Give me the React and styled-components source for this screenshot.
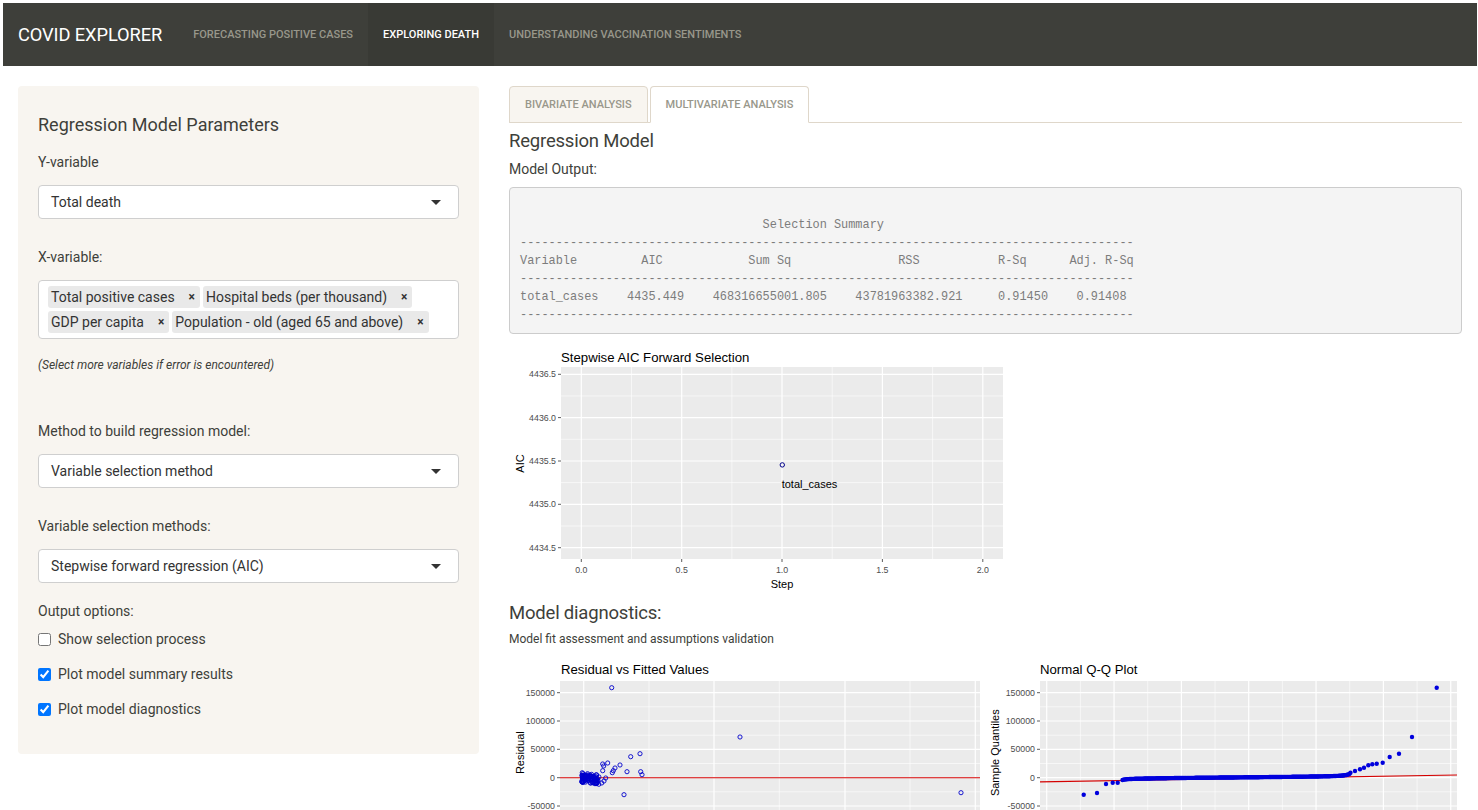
import React from 'react';
import styled, { createGlobalStyle } from 'styled-components';

const GlobalStyle = createGlobalStyle`
  html, body {
    margin: 0;
    overflow: hidden;
    background: #fff;
  }
  body {
    padding: 3px 1px 0 3px;
    font-family: Roboto, "Noto Sans", sans-serif;
    color: #3e3f3a;
  }
  * { box-sizing: border-box; }
`;

const Page = styled.div`
  width: 1474px;
`;

const NavBar = styled.nav`
  display: flex;
  height: 63px;
  background: #3e3f3a;
  padding-left: 15px;
`;

const Brand = styled.div`
  display: flex;
  align-items: center;
  padding-right: 16px;
  color: #fff;
  font-size: 18.3px;
  letter-spacing: -0.1px;
`;

const NavItem = styled.div`
  display: flex;
  align-items: center;
  padding: 0 15px;
  font-size: 11px;
  font-weight: 500;
  text-transform: uppercase;
  color: ${(p) => (p.$active ? '#fff' : '#98978b')};
  background: ${(p) => (p.$active ? '#393a35' : 'transparent')};
`;

const Layout = styled.div`
  display: grid;
  grid-template-columns: 461px 1fr;
  gap: 30px;
  padding: 20px 15px 0;
  align-items: start;
`;

const Well = styled.aside`
  background: #f8f5f0;
  border-radius: 4px;
  padding: 19px 20px 35px;
  display: flex;
  flex-direction: column;
`;

const PanelTitle = styled.h4`
  margin: 9px 0 0;
  font-size: 18px;
  font-weight: 400;
  line-height: 22px;
`;

const FieldLabel = styled.div`
  margin-top: ${(p) => p.$mt}px;
  margin-bottom: ${(p) => p.$mb ?? 13}px;
  font-size: 14px;
  line-height: 20px;
`;

const SelectBox = styled.div`
  position: relative;
  height: 34px;
  background: #fff;
  border: 1px solid #cfcfcf;
  border-radius: 4px;
  padding: 0 12px;
  display: flex;
  align-items: center;
  font-size: 14px;
  color: #333;
`;

const Caret = styled.span`
  position: absolute;
  right: 17px;
  top: 14px;
  width: 0;
  height: 0;
  border-left: 5px solid transparent;
  border-right: 5px solid transparent;
  border-top: 5px solid #333;
`;

const MultiBox = styled.div`
  height: 59px;
  background: #fff;
  border: 1px solid #cfcfcf;
  border-radius: 4px;
  padding: 5px 9px 0;
  display: flex;
  flex-wrap: wrap;
  align-content: flex-start;
  gap: 3px;
`;

const Tag = styled.span`
  display: inline-flex;
  align-items: center;
  height: 22px;
  padding: 0 5px 0 3px;
  background: #e9e9e9;
  border-radius: 3px;
  font-size: 14px;
  color: #333;
`;

const TagRemove = styled.span`
  margin-left: 14px;
  font-size: 12px;
  font-weight: 700;
  color: #333;
`;

const HelpText = styled.div`
  margin-top: 18px;
  font-size: 12px;
  line-height: 17px;
  font-style: italic;
`;

const CheckRow = styled.label`
  display: flex;
  align-items: center;
  height: 20px;
  margin-top: ${(p) => p.$mt}px;
  font-size: 14px;
`;

const CheckInput = styled.input`
  width: 13px;
  height: 13px;
  margin: 0 7px 0 0;
`;

const Main = styled.main`
  display: flex;
  flex-direction: column;
`;

const TabBar = styled.div`
  display: flex;
  gap: 2px;
  height: 37px;
  border-bottom: 1px solid #dfd7ca;
`;

const Tab = styled.div`
  display: flex;
  align-items: center;
  height: 37px;
  padding: 0 15px;
  border: 1px solid #dfd7ca;
  border-bottom-color: ${(p) => (p.$active ? '#fff' : '#dfd7ca')};
  border-radius: 4px 4px 0 0;
  background: ${(p) => (p.$active ? '#fff' : '#f8f5f0')};
  font-size: 11px;
  font-weight: 500;
  text-transform: uppercase;
  color: #98978b;
`;

const SectionTitle = styled.h3`
  margin: ${(p) => p.$mt}px 0 0;
  font-size: 18.5px;
  font-weight: 400;
  line-height: 22px;
  letter-spacing: -0.2px;
`;

const SubText = styled.div`
  margin-top: ${(p) => p.$mt}px;
  font-size: ${(p) => p.$size}px;
  line-height: ${(p) => p.$lh}px;
`;

const Verbatim = styled.pre`
  margin: 8px 0 0;
  padding: 9.5px 10px;
  background: #f4f4f4;
  border: 1px solid #ccc;
  border-radius: 4px;
  font-family: "Liberation Mono", "DejaVu Sans Mono", monospace;
  font-size: 11.9px;
  line-height: 18px;
  color: #7c7c7c;
  white-space: pre;
  overflow: hidden;
`;

const PlotRow = styled.div`
  display: flex;
  margin-top: 9px;
`;

const PlotSvg = styled.svg`
  display: block;
  flex: none;
  margin-top: ${(p) => p.$mt || 0}px;
  font-family: "Liberation Sans", Arial, sans-serif;
`;

// ---------- summary text ----------
const place = (parts) => {
  let s = '';
  parts.forEach(([col, txt]) => {
    s = s.padEnd(col, ' ') + txt;
  });
  return s;
};
const dash = '-'.repeat(86);
const summary = [
  '',
  place([[34, 'Selection Summary']]),
  dash,
  place([[0, 'Variable'], [17, 'AIC'], [32, 'Sum Sq'], [53, 'RSS'], [67, 'R-Sq'], [77, 'Adj. R-Sq']]),
  dash,
  place([[0, 'total_cases'], [15, '4435.449'], [27, '468316655001.805'], [47, '43781963382.921'], [67, '0.91450'], [78, '0.91408']]),
  dash,
].join('\n');

// ---------- plot helpers ----------
const qnorm = (p) => {
  const r = p < 0.5 ? p : 1 - p;
  const t = Math.sqrt(-2 * Math.log(r));
  const x = t - (2.515517 + 0.802853 * t + 0.010328 * t * t) /
    (1 + 1.432788 * t + 0.189269 * t * t + 0.001308 * t * t * t);
  return p < 0.5 ? -x : x;
};

const Panel = ({ x0, x1, y0, y1, vMajor = [], vMinor = [], hMajor = [], hMinor = [] }) => (
  <g>
    <rect x={x0} y={y0} width={x1 - x0} height={y1 - y0} fill="#ebebeb" />
    {vMinor.map((x) => <line key={'vm' + x} x1={x} x2={x} y1={y0} y2={y1} stroke="#fff" strokeWidth="0.6" />)}
    {hMinor.map((y) => <line key={'hm' + y} x1={x0} x2={x1} y1={y} y2={y} stroke="#fff" strokeWidth="0.6" />)}
    {vMajor.map((x) => <line key={'vM' + x} x1={x} x2={x} y1={y0} y2={y1} stroke="#fff" strokeWidth="1.2" />)}
    {hMajor.map((y) => <line key={'hM' + y} x1={x0} x2={x1} y1={y} y2={y} stroke="#fff" strokeWidth="1.2" />)}
  </g>
);

const YAxis = ({ x0, ticks }) => (
  <g>
    {ticks.map(([y, label]) => (
      <g key={label}>
        <line x1={x0 - 3} x2={x0} y1={y} y2={y} stroke="#333" strokeWidth="0.8" />
        <text x={x0 - 5} y={y + 3} fontSize="8.8" fill="#4d4d4d" textAnchor="end">{label}</text>
      </g>
    ))}
  </g>
);

const AicPlot = () => {
  const yt = [[28.3, '4436.5'], [71.6, '4436.0'], [115, '4435.5'], [158.3, '4435.0'], [201.7, '4434.5']];
  const xt = [[72.3, '0.0'], [172.7, '0.5'], [273, '1.0'], [373.4, '1.5'], [473.8, '2.0']];
  return (
    <PlotSvg width="500" height="252" $mt={12}>
      <text x="52" y="15.5" fontSize="13.2" fill="#000">Stepwise AIC Forward Selection</text>
      <Panel
        x0={52} x1={494} y0={21} y1={213}
        vMajor={xt.map((t) => t[0])}
        vMinor={[122.5, 222.9, 323.2, 423.6]}
        hMajor={yt.map((t) => t[0])}
        hMinor={[49.95, 93.3, 136.6, 180]}
      />
      <YAxis x0={52} ticks={yt} />
      {xt.map(([x, label]) => (
        <g key={label}>
          <line x1={x} x2={x} y1={213} y2={216} stroke="#333" strokeWidth="0.8" />
          <text x={x} y={227} fontSize="8.8" fill="#4d4d4d" textAnchor="middle">{label}</text>
        </g>
      ))}
      <text x="273" y="242" fontSize="11" textAnchor="middle" fill="#000">Step</text>
      <text transform="translate(15 117.5) rotate(-90)" fontSize="11" textAnchor="middle" fill="#000">AIC</text>
      <circle cx="273.3" cy="118.9" r="2.2" fill="none" stroke="#00008b" strokeWidth="1" />
      <text x="272.7" y="142" fontSize="11" fill="#000">total_cases</text>
    </PlotSvg>
  );
};

const diagY = [[36.7, '150000'], [65, '100000'], [93.3, '50000'], [121.7, '0'], [150, '-50000']];
const diagMinor = [50.8, 79.2, 107.5, 135.8, 164.2];

let seed = 7;
const rand = () => {
  seed = (seed * 16807) % 2147483647;
  return (seed - 1) / 2147483646;
};

const residualPts = (() => {
  const pts = [
    [102.7, 31.7], [231, 81], [452, 136.7], [115, 138.7], [131, 97.7], [121.7, 100.7],
    [111, 109], [98.7, 107], [93.7, 108], [94.7, 110], [106, 112], [104.3, 114.7],
    [103.3, 116.7], [93.7, 114.7], [118, 115.7], [131.7, 115.7], [133, 118.7],
    [96.7, 122], [95, 125], [92.7, 127], [86, 127.7], [89, 124.5], [84, 126],
  ];
  for (let i = 0; i < 80; i++) {
    const x = 73 + Math.pow(rand(), 1.6) * 17;
    const y = 121.7 + (rand() - 0.5) * 10 + (x - 73) * 0.12;
    pts.push([x, y]);
  }
  return pts;
})();

const ResidualPlot = () => (
  <PlotSvg width="476" height="190">
    <text x="52" y="17.5" fontSize="13.2" fill="#000">Residual vs Fitted Values</text>
    <Panel
      x0={51} x1={471} y0={25} y1={190}
      vMajor={[74.7, 205, 336, 466.3]}
      vMinor={[140, 270.3, 401]}
      hMajor={diagY.map((t) => t[0])}
      hMinor={diagMinor}
    />
    <YAxis x0={51} ticks={diagY} />
    <text transform="translate(15 96.7) rotate(-90)" fontSize="11" textAnchor="middle" fill="#000">Residual</text>
    <line x1="51" x2="471" y1="121.7" y2="121.7" stroke="#d40000" strokeWidth="1.1" />
    {residualPts.map(([x, y], i) => (
      <circle key={i} cx={x} cy={y} r="2.1" fill="none" stroke="#0000cc" strokeWidth="0.9" />
    ))}
  </PlotSvg>
);

const qqPts = (() => {
  const pts = [[98.7, 138.7], [112, 137], [121, 128], [127.7, 126.7], [132.7, 126.7]];
  const m = 220;
  for (let j = 0; j < m; j++) {
    const p = (j + 0.5) / m;
    const x = 137 + p * 229;
    const q = qnorm(p);
    const y = 121.4 - 0.9 * q - 0.8 * Math.pow(Math.max(0, q - 1.2), 2);
    pts.push([x, y]);
  }
  pts.push(
    [370, 115], [375, 113.3], [379, 111.7], [383.3, 109.3], [387.3, 108.3], [391.7, 107.7],
    [397.7, 106.7], [404.7, 101], [414, 97.7], [427, 81], [451.7, 31.7],
  );
  return pts;
})();

const QQPlot = () => {
  const vLines = Array.from({ length: 13 }, (_, i) => 61.7 + i * 33.67);
  return (
    <PlotSvg width="477" height="190">
      <text x="55" y="17.5" fontSize="13.2" fill="#000">Normal Q-Q Plot</text>
      <Panel
        x0={55} x1={472} y0={25} y1={190}
        vMajor={vLines.filter((_, i) => i % 2 === 0)}
        vMinor={vLines.filter((_, i) => i % 2 === 1)}
        hMajor={diagY.map((t) => t[0])}
        hMinor={diagMinor}
      />
      <YAxis x0={55} ticks={diagY} />
      <text transform="translate(14 96.7) rotate(-90)" fontSize="11" textAnchor="middle" fill="#000">Sample Quantiles</text>
      <line x1="55" x2="472" y1="125.9" y2="119" stroke="#d40000" strokeWidth="1.1" />
      {qqPts.map(([x, y], i) => (
        <circle key={i} cx={x} cy={y} r="2.2" fill="#0000dd" />
      ))}
    </PlotSvg>
  );
};

const tags = [
  'Total positive cases',
  'Hospital beds (per thousand)',
  'GDP per capita',
  'Population - old (aged 65 and above)',
];

const App = () => (
  <Page>
    <GlobalStyle />
    <NavBar>
      <Brand>COVID EXPLORER</Brand>
      <NavItem>Forecasting positive cases</NavItem>
      <NavItem $active>Exploring death</NavItem>
      <NavItem>Understanding vaccination sentiments</NavItem>
    </NavBar>
    <Layout>
      <Well>
        <PanelTitle>Regression Model Parameters</PanelTitle>
        <FieldLabel $mt={16}>Y-variable</FieldLabel>
        <SelectBox>Total death<Caret /></SelectBox>
        <FieldLabel $mt={28}>X-variable:</FieldLabel>
        <MultiBox>
          {tags.map((t) => (
            <Tag key={t}>{t}<TagRemove>×</TagRemove></Tag>
          ))}
        </MultiBox>
        <HelpText>(Select more variables if error is encountered)</HelpText>
        <FieldLabel $mt={47}>Method to build regression model:</FieldLabel>
        <SelectBox>Variable selection method<Caret /></SelectBox>
        <FieldLabel $mt={28}>Variable selection methods:</FieldLabel>
        <SelectBox>Stepwise forward regression (AIC)<Caret /></SelectBox>
        <FieldLabel $mt={18} $mb={0}>Output options:</FieldLabel>
        <CheckRow $mt={8}><CheckInput type="checkbox" />Show selection process</CheckRow>
        <CheckRow $mt={15}><CheckInput type="checkbox" defaultChecked />Plot model summary results</CheckRow>
        <CheckRow $mt={15}><CheckInput type="checkbox" defaultChecked />Plot model diagnostics</CheckRow>
      </Well>
      <Main>
        <TabBar>
          <Tab>Bivariate analysis</Tab>
          <Tab $active>Multivariate analysis</Tab>
        </TabBar>
        <SectionTitle $mt={7}>Regression Model</SectionTitle>
        <SubText $mt={7} $size={14} $lh={20}>Model Output:</SubText>
        <Verbatim>{summary}</Verbatim>
        <AicPlot />
        <SectionTitle $mt={4}>Model diagnostics:</SectionTitle>
        <SubText $mt={7} $size={12} $lh={16}>Model fit assessment and assumptions validation</SubText>
        <PlotRow>
          <ResidualPlot />
          <QQPlot />
        </PlotRow>
      </Main>
    </Layout>
  </Page>
);

export default App;
